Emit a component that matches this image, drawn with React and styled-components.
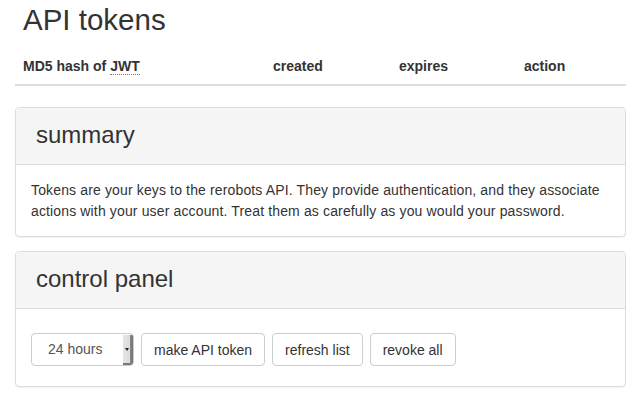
import React from "react";
import styled, { createGlobalStyle } from "styled-components";

const Global = createGlobalStyle`
  html, body { margin: 0; padding: 0; background: #fff; }
  body {
    font-family: "Liberation Sans", Arial, Helvetica, sans-serif;
    font-size: 14px;
    line-height: 20px;
    color: #333;
  }
`;

const Page = styled.div`
  padding: 0 15px;
`;

const Title = styled.h1`
  margin: 3px 0 12px 8px;
  font-size: 29.5px;
  font-weight: 400;
  line-height: 33px;
  color: #333;
`;

const Table = styled.table`
  width: 100%;
  table-layout: fixed;
  border-collapse: collapse;
  margin-bottom: 21px;
`;

const Th = styled.th`
  text-align: left;
  font-weight: 700;
  padding: 8px;
  line-height: 20px;
  border-bottom: 2px solid #ddd;
  width: ${(p) => p.$w || "auto"};
`;

const Abbr = styled.abbr`
  text-decoration: none;
  border-bottom: 1px dotted #777;
`;

const Panel = styled.section`
  border: 1px solid #ddd;
  border-radius: 4px;
  box-shadow: 0 1px 1px rgba(0, 0, 0, 0.05);
  margin-bottom: 14px;
  background: #fff;
`;

const PanelHeading = styled.div`
  background: #f5f5f5;
  border-bottom: 1px solid #ddd;
  border-radius: 3px 3px 0 0;
  padding: 14px 20px 16px 20px;
`;

const PanelTitle = styled.h3`
  margin: 0;
  font-size: 24px;
  font-weight: 400;
  line-height: 26px;
  color: #333;
`;

const PanelBody = styled.div`
  padding: ${(p) => p.$pad || "15px 15px 14px"};
  line-height: 21px;
  letter-spacing: ${(p) => (p.$wide ? "0.14px" : "0")};
`;

const Controls = styled.div`
  display: flex;
  gap: 7px;
  align-items: center;
`;

const SelectBox = styled.div`
  display: flex;
  align-items: stretch;
  width: 103px;
  height: 33px;
  box-sizing: border-box;
  border: 1px solid #ccc;
  border-radius: 4px;
  background: #fff;
  overflow: hidden;
`;

const SelectText = styled.span`
  flex: 1;
  padding-left: 16px;
  line-height: 31px;
  color: #555;
`;

const SelectArrow = styled.span`
  width: 10px;
  margin: 1px 0 0 0;
  background: linear-gradient(to right, #e4e4e4 0, #dcdcdc 70%, #8a8a8a 70%, #707070 100%);
  border-bottom: 2px solid #7a7a7a;
  display: flex;
  align-items: center;
  justify-content: flex-start;
  padding-left: 2px;
  box-sizing: border-box;
  &::after {
    content: "";
    display: block;
    width: 0;
    height: 0;
    border-left: 2.5px solid transparent;
    border-right: 2.5px solid transparent;
    border-top: 3px solid #222;
    margin-top: 1px;
  }
`;

const Button = styled.button`
  height: 33px;
  box-sizing: border-box;
  padding: 6px 12px;
  font-family: inherit;
  font-size: 14px;
  line-height: 20px;
  color: #333;
  background: #fff;
  border: 1px solid #ccc;
  border-radius: 4px;
  cursor: pointer;
`;

export default function App() {
  return (
    <>
      <Global />
      <Page>
        <Title>API tokens</Title>
        <Table>
          <thead>
            <tr>
              <Th $w="234px">
                MD5 hash of <Abbr title="JSON Web Token">JWT</Abbr>
              </Th>
              <Th $w="110px">created</Th>
              <Th $w="109px">expires</Th>
              <Th>action</Th>
            </tr>
          </thead>
        </Table>
        <Panel>
          <PanelHeading>
            <PanelTitle>summary</PanelTitle>
          </PanelHeading>
          <PanelBody $wide>
            Tokens are your keys to the rerobots API. They provide authentication, and they associate
            actions with your user account. Treat them as carefully as you would your password.
          </PanelBody>
        </Panel>
        <Panel>
          <PanelHeading>
            <PanelTitle>control panel</PanelTitle>
          </PanelHeading>
          <PanelBody $pad="24px 15px 20px">
            <Controls>
              <SelectBox>
                <SelectText>24 hours</SelectText>
                <SelectArrow />
              </SelectBox>
              <Button>make API token</Button>
              <Button>refresh list</Button>
              <Button>revoke all</Button>
            </Controls>
          </PanelBody>
        </Panel>
      </Page>
    </>
  );
}
